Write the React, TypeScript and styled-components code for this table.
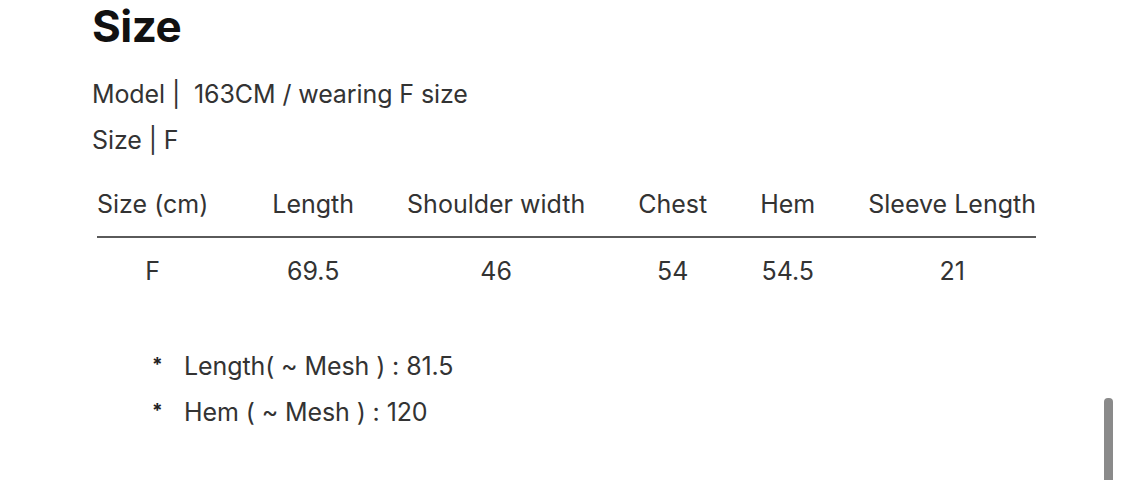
import styled, { createGlobalStyle } from "styled-components";

const GlobalStyle = createGlobalStyle`
  html, body {
    margin: 0;
    padding: 0;
    background: #ffffff;
  }
  body {
    font-family: Inter, "Noto Sans", "Liberation Sans", sans-serif;
    color: #333333;
  }
`;

const Page = styled.div`
  position: relative;
  width: 1125px;
  height: 480px;
  overflow: hidden;
  padding-left: 92px;
  box-sizing: border-box;
`;

const Title = styled.h1`
  margin: 0;
  font-size: 44px;
  line-height: 53px;
  font-weight: 700;
  color: #111111;
  letter-spacing: -0.5px;
`;

const InfoBox = styled.div`
  margin-top: 18px;
`;

const InfoLine = styled.div`
  font-size: 25px;
  line-height: 46px;
  color: #333333;
  letter-spacing: -0.1px;
  white-space: pre;
`;

const Table = styled.div`
  display: grid;
  grid-template-columns: repeat(6, max-content);
  justify-content: start;
  column-gap: 53px;
  margin-left: 5px;
  margin-top: 26px;
`;

const HeadCell = styled.div<{ first?: boolean }>`
  font-size: 25px;
  line-height: 30px;
  color: #333333;
  white-space: nowrap;
  text-align: center;
  padding-bottom: 17px;
  padding-right: ${({ first }) => (first ? "11px" : "0")};
`;

const Rule = styled.div`
  grid-column: 1 / -1;
  height: 2px;
  background: #5a5a5a;
`;

const ValueCell = styled.div<{ first?: boolean }>`
  font-size: 25px;
  line-height: 30px;
  color: #333333;
  text-align: center;
  padding-top: 18px;
  padding-right: ${({ first }) => (first ? "11px" : "0")};
`;

const Notes = styled.ul`
  list-style: none;
  margin: 57px 0 0 60px;
  padding: 0;
`;

const Note = styled.li`
  display: flex;
  align-items: baseline;
  font-size: 25px;
  line-height: 46px;
  color: #333333;
  letter-spacing: -0.1px;
  white-space: pre;
`;

const Star = styled.span`
  width: 32px;
  font-size: 19px;
  line-height: 1;
  font-weight: 700;
  color: #222222;
  transform: translateY(-4px);
`;

const ScrollThumb = styled.div`
  position: absolute;
  left: 1104px;
  top: 398px;
  width: 9px;
  height: 90px;
  border-radius: 4px 4px 0 0;
  background: #8a8a8a;
`;

const headers = [
  "Size (cm)",
  "Length",
  "Shoulder width",
  "Chest",
  "Hem",
  "Sleeve Length",
];
const values = ["F", "69.5", "46", "54", "54.5", "21"];
const notes = ["Length( ~ Mesh ) : 81.5", "Hem ( ~ Mesh ) : 120"];

const App = () => {
  return (
    <Page>
      <GlobalStyle />
      <Title>Size</Title>
      <InfoBox>
        <InfoLine>Model |  163CM / wearing F size</InfoLine>
        <InfoLine>Size | F</InfoLine>
      </InfoBox>
      <Table>
        {headers.map((h, i) => (
          <HeadCell key={`head-${h}`} first={i === 0}>
            {h}
          </HeadCell>
        ))}
        <Rule />
        {values.map((v, i) => (
          <ValueCell key={`value-${i}`} first={i === 0}>
            {v}
          </ValueCell>
        ))}
      </Table>
      <Notes>
        {notes.map((n) => (
          <Note key={n}>
            <Star>*</Star>
            {n}
          </Note>
        ))}
      </Notes>
      <ScrollThumb />
    </Page>
  );
};

export default App;
